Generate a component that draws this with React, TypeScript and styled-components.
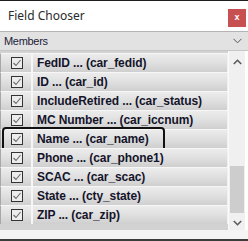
import styled, { createGlobalStyle } from "styled-components";

const fields = [
  { label: "FedID", column: "car_fedid" },
  { label: "ID", column: "car_id" },
  { label: "IncludeRetired", column: "car_status" },
  { label: "MC Number", column: "car_iccnum" },
  { label: "Name", column: "car_name", focused: true },
  { label: "Phone", column: "car_phone1" },
  { label: "SCAC", column: "car_scac" },
  { label: "State", column: "cty_state" },
  { label: "ZIP", column: "car_zip" },
];

const GlobalStyle = createGlobalStyle`
  body {
    margin: 0;
    background: #fff;
  }
`;

const CheckIcon = () => (
  <svg width="12" height="12" viewBox="0 0 12 12">
    <rect x="0.5" y="0.5" width="11" height="11" fill="#ececec" stroke="#333" />
    <polyline points="2.5,6 5,8.5 9.5,3" fill="none" stroke="#6a6a6a" strokeWidth="1.1" />
  </svg>
);

const Chevron = ({ up }: { up?: boolean }) => (
  <svg width="9" height="6" viewBox="0 0 9 6">
    <polyline
      points={up ? "0.8,5 4.5,1.3 8.2,5" : "0.8,1 4.5,4.7 8.2,1"}
      fill="none"
      stroke="#5a5a5a"
      strokeWidth="1.6"
    />
  </svg>
);

const App = () => {
  return (
    <Window>
      <GlobalStyle />
      <TitleBar>
        <Title>Field Chooser</Title>
        <CloseButton>x</CloseButton>
      </TitleBar>
      <Dropdown>
        <span>Members</span>
        <svg width="9" height="6" viewBox="0 0 9 6">
          <polyline points="0.5,0.8 4.5,4.8 8.5,0.8" fill="none" stroke="#555" strokeWidth="1" />
        </svg>
      </Dropdown>
      <ListArea>
        <Rows>
          {fields.map(f => (
            <Row key={f.column}>
              <CheckCell>
                <CheckIcon />
              </CheckCell>
              <TextCell>
                {f.label} ... ({f.column})
              </TextCell>
              {f.focused && <FocusRing />}
            </Row>
          ))}
        </Rows>
        <ScrollBar>
          <ArrowBox $top>
            <Chevron up />
          </ArrowBox>
          <Track>
            <Thumb />
          </Track>
          <ArrowBox>
            <Chevron />
          </ArrowBox>
        </ScrollBar>
      </ListArea>
      <Footer />
    </Window>
  );
};

export default App;

const Window = styled.div`
  width: 248px;
  height: 241px;
  display: flex;
  flex-direction: column;
  border-top: 1px solid #1e1e1e;
  box-sizing: border-box;
  background: #fff;
  overflow: hidden;
`;

const TitleBar = styled.div`
  height: 30px;
  display: flex;
  align-items: center;
  justify-content: space-between;
  padding: 0 2px 0 8px;
`;

const Title = styled.div`
  font-family: "Noto Sans", "Open Sans", sans-serif;
  font-size: 12px;
  color: #2a2a2a;
  margin-top: -2px;
`;

const CloseButton = styled.div`
  width: 18px;
  height: 18px;
  margin-top: 4px;
  background: #c75050;
  color: #fff;
  font-family: "Liberation Sans", Arial, sans-serif;
  font-weight: bold;
  font-size: 9px;
  line-height: 16px;
  text-align: center;
`;

const Dropdown = styled.div`
  height: 20px;
  box-sizing: border-box;
  border-top: 1px solid #b4b4b4;
  border-bottom: 1px solid #c6c6c6;
  background: #e2e2e2;
  display: flex;
  align-items: center;
  justify-content: space-between;
  padding: 0 6px 0 4px;
  font-family: "Liberation Sans", Arial, sans-serif;
  font-size: 11px;
  letter-spacing: -0.3px;
  color: #1c1c3a;
`;

const ListArea = styled.div`
  height: 179px;
  display: flex;
  padding-right: 2px;
`;

const Rows = styled.div`
  width: 229px;
  background: #d2d2d2;
  border-right: 1px solid #fafafa;
  padding-top: 2px;
  box-sizing: border-box;
  display: flex;
  flex-direction: column;
`;

const Row = styled.div`
  position: relative;
  height: 19px;
  display: flex;
  border-top: 1px solid #f6f6f6;
  box-sizing: border-box;
  border-left: 1px solid #a8a8a8;
`;

const cellBackground = `linear-gradient(to bottom, #ececec 0%, #dedede 55%, #cfcfcf 100%)`;

const CheckCell = styled.div`
  width: 32px;
  background: ${cellBackground};
  display: flex;
  align-items: center;
  justify-content: center;
  padding-left: 2px;
  box-sizing: border-box;
  border-right: 2px solid #f6f6f6;
`;

const TextCell = styled.div`
  flex: 1;
  background: ${cellBackground};
  border-right: 1px solid #f0f0f0;
  padding-left: 4px;
  display: flex;
  align-items: center;
  font-family: "Liberation Sans", Arial, sans-serif;
  font-weight: bold;
  font-size: 12px;
  letter-spacing: -0.1px;
  color: #14142a;
  white-space: nowrap;
`;

const FocusRing = styled.div`
  position: absolute;
  left: 1px;
  top: -3px;
  width: 163px;
  height: 25px;
  border: 2px solid #111;
  border-radius: 4px;
  box-sizing: border-box;
  pointer-events: none;
`;

const ScrollBar = styled.div`
  width: 16px;
  background: #f0f0f0;
  display: flex;
  flex-direction: column;
`;

const ArrowBox = styled.div<{ $top?: boolean }>`
  height: 14px;
  margin-top: ${p => (p.$top ? "4px" : "0")};
  display: flex;
  align-items: center;
  justify-content: center;
`;

const Track = styled.div`
  flex: 1;
  display: flex;
  flex-direction: column;
  justify-content: flex-end;
`;

const Thumb = styled.div`
  height: 47px;
  margin: 0 1px 3px 1px;
  background: #cdcdcd;
`;

const Footer = styled.div`
  flex: 1;
  background: #f4f4f4;
  border-bottom: 2px solid #3c3c3c;
`;
